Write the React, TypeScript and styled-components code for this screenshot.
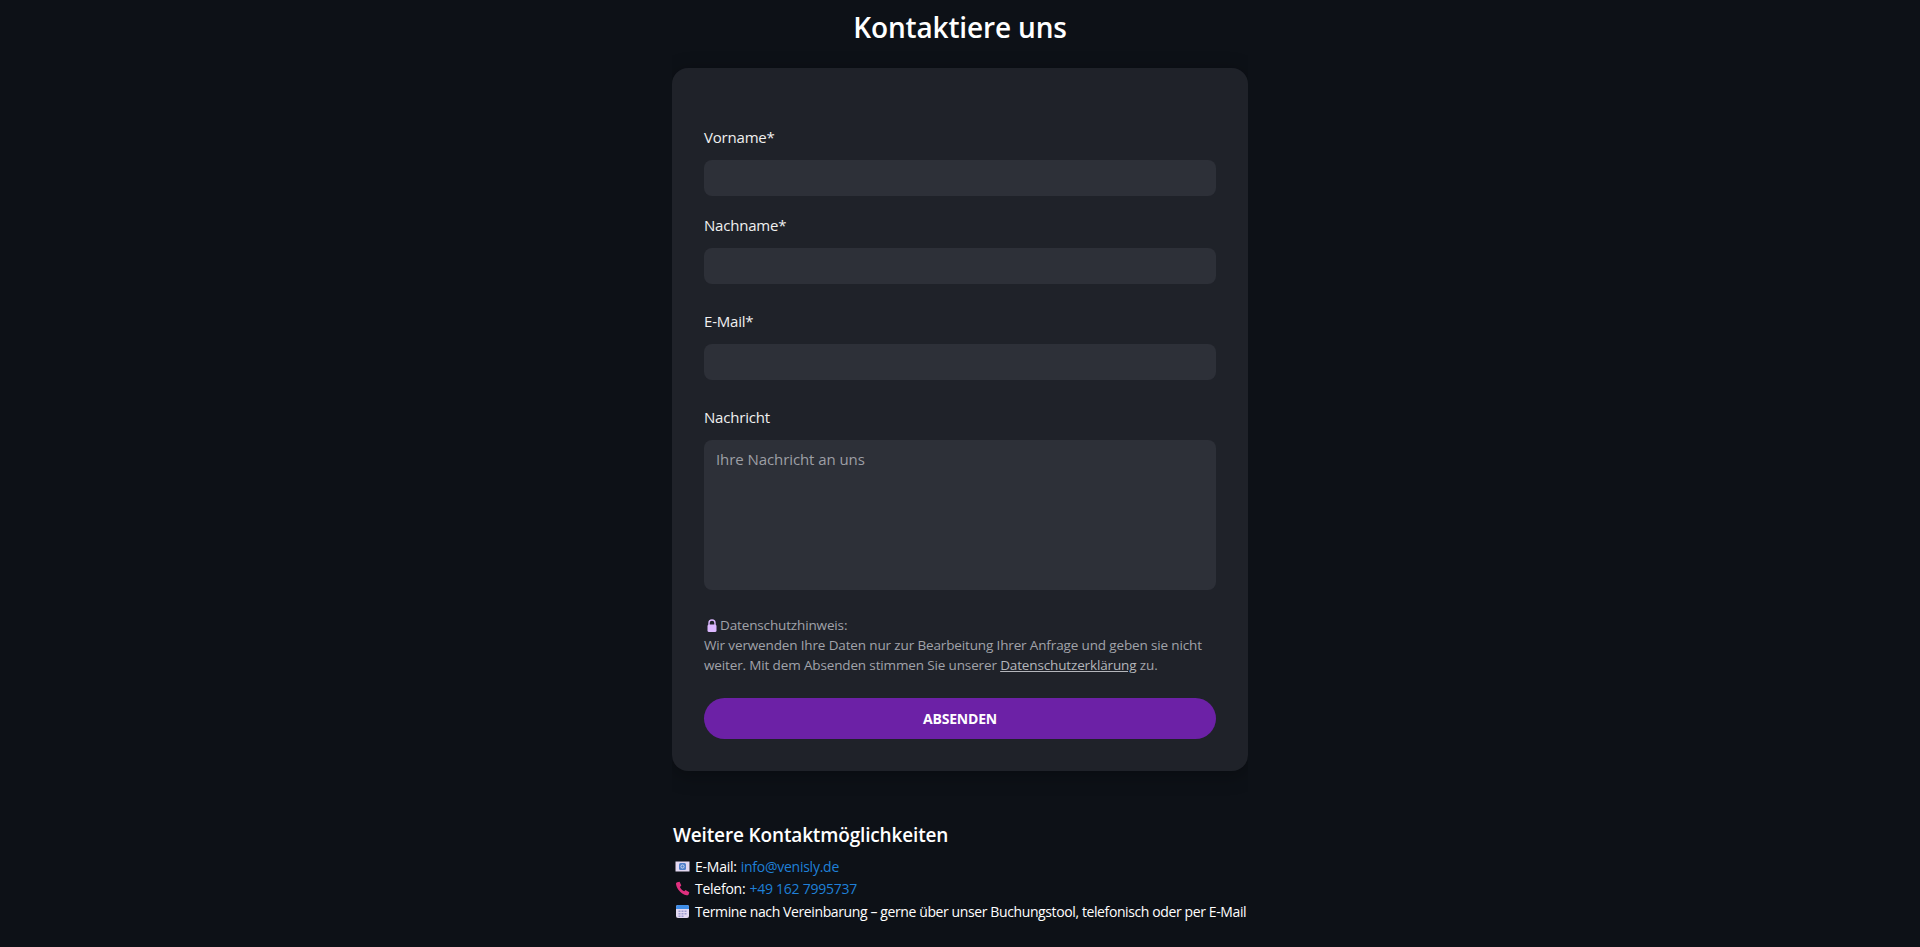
import styled, { createGlobalStyle } from 'styled-components';

const GlobalStyle = createGlobalStyle`
  html, body {
    margin: 0;
    padding: 0;
    background: #0d1117;
    color: #ffffff;
    font-family: 'Open Sans', 'Noto Sans', sans-serif;
  }
  * {
    box-sizing: border-box;
  }
`;

const Page = styled.main`
  width: 576px;
  margin: 0 auto;
  padding-top: 7px;
  height: 947px;
  overflow: hidden;
`;

const Title = styled.h1`
  margin: 0 0 21px;
  height: 40px;
  line-height: 40px;
  font-size: 28px;
  font-weight: 600;
  text-align: center;
  letter-spacing: -0.15px;
`;

const Card = styled.form`
  height: 703px;
  padding: 56px 32px 32px;
  background: #1f2229;
  border-radius: 16px;
  box-shadow: 0 4px 20px rgba(0, 0, 0, 0.3);
`;

const Field = styled.div<{ $gap: number }>`
  display: flex;
  flex-direction: column;
  margin-bottom: ${({ $gap }) => $gap}px;
`;

const Label = styled.label`
  height: 26px;
  line-height: 26px;
  margin-bottom: 10px;
  font-size: 15px;
  color: #f0f0f0;
  letter-spacing: -0.2px;
`;

const Input = styled.input`
  height: 36px;
  border: 0;
  border-radius: 8px;
  background: #2d3038;
`;

const TextArea = styled.textarea`
  height: 150px;
  padding: 9px 12px;
  border: 0;
  border-radius: 8px;
  background: #2d3038;
  resize: none;
  font: inherit;
  font-size: 15px;
  letter-spacing: -0.08px;
  color: #ffffff;

  &::placeholder {
    color: #9d9fa5;
    opacity: 1;
  }
`;

const Notice = styled.p`
  margin: 0 0 22.5px;
  font-size: 13.5px;
  line-height: 20px;
  color: #a1a3a9;
  letter-spacing: -0.14px;

  a {
    color: #b4b6bb;
    text-decoration: underline;
  }
`;

const LockIcon = styled.svg`
  width: 12px;
  height: 13px;
  margin: 0 2px;
  vertical-align: -2px;
`;

const SubmitButton = styled.button`
  display: block;
  width: 100%;
  height: 41px;
  border: 0;
  border-radius: 21px;
  background: #6c21a6;
  color: #ffffff;
  font: inherit;
  font-size: 14px;
  font-weight: 700;
  letter-spacing: -0.2px;
`;

const Contact = styled.section`
  margin-top: 50px;
`;

const ContactTitle = styled.h2`
  margin: 0 0 6px;
  padding-left: 1px;
  height: 28px;
  line-height: 28px;
  font-size: 19px;
  font-weight: 600;
  letter-spacing: -0.15px;
`;

const ContactRow = styled.div`
  display: flex;
  align-items: center;
  height: 22.5px;
  padding-left: 3px;
  font-size: 14px;
  letter-spacing: -0.25px;
  white-space: nowrap;
  gap: 4px;
`;

const RowIcon = styled.svg`
  width: 15px;
  height: 15px;
  margin-right: 1px;
  flex: none;
`;

const RowText = styled.span<{ $narrow?: boolean }>`
  color: #ffffff;
  letter-spacing: ${({ $narrow }) => ($narrow ? '-0.39px' : 'inherit')};
`;

const ContactLink = styled.a`
  color: #1f80d8;
  text-decoration: none;
`;

export default function App() {
  return (
    <>
      <GlobalStyle />
      <Page>
        <Title>Kontaktiere uns</Title>
        <Card>
          <Field $gap={16}>
            <Label>Vorname*</Label>
            <Input />
          </Field>
          <Field $gap={24}>
            <Label>Nachname*</Label>
            <Input />
          </Field>
          <Field $gap={24}>
            <Label>E-Mail*</Label>
            <Input />
          </Field>
          <Field $gap={25}>
            <Label>Nachricht</Label>
            <TextArea placeholder="Ihre Nachricht an uns" />
          </Field>
          <Notice>
            <LockIcon viewBox="0 0 12 13">
              <path d="M3 6V4a3 3 0 0 1 6 0v2" fill="none" stroke="#dcb8ff" strokeWidth="1.4" />
              <rect x="1.5" y="5.5" width="9" height="7.5" rx="1.5" fill="#dcb8ff" />
            </LockIcon>
            Datenschutzhinweis:
            <br />
            Wir verwenden Ihre Daten nur zur Bearbeitung Ihrer Anfrage und geben sie nicht
            <br />
            weiter. Mit dem Absenden stimmen Sie unserer <a href="#">Datenschutzerklärung</a> zu.
          </Notice>
          <SubmitButton type="button">ABSENDEN</SubmitButton>
        </Card>
        <Contact>
          <ContactTitle>Weitere Kontaktmöglichkeiten</ContactTitle>
          <ContactRow>
            <RowIcon viewBox="0 0 15 15">
              <rect x="0.5" y="2.5" width="14" height="10" fill="#e3d9f2" />
              <rect x="4" y="4" width="7" height="7" rx="1.5" fill="#4f7fc9" />
              <circle cx="7.5" cy="7.5" r="1.6" fill="none" stroke="#dfe7f7" strokeWidth="0.8" />
            </RowIcon>
            <RowText>E-Mail:</RowText>
            <ContactLink href="#">info@venisly.de</ContactLink>
          </ContactRow>
          <ContactRow>
            <RowIcon viewBox="0 0 15 15">
              <path
                d="M2.2 1.2 4.6.7l1.7 3.8-1.4 1.4c.7 1.8 2.4 3.5 4.3 4.4l1.3-1.2 3.8 2.2-.7 2.1c-.4.9-1.2 1.1-2.1.9C6 13 1.7 8.2 1 3c-.1-.8.4-1.600 1.200-1.800Z"
                fill="#e0307f"
              />
            </RowIcon>
            <RowText>Telefon:</RowText>
            <ContactLink href="#">+49 162 7995737</ContactLink>
          </ContactRow>
          <ContactRow>
            <RowIcon viewBox="0 0 15 15">
              <rect x="1" y="1" width="13" height="13" rx="2" fill="#e3d9f2" />
              <path d="M1 5V3a2 2 0 0 1 2-2h9a2 2 0 0 1 2 2v2Z" fill="#3f8ee8" />
              <path
                d="M3.5 6.500h2V8h-2zM6.500 6.500h2V8h-2zM9.500 6.500h2V8h-2zM3.500 9h2v1.500h-2zM6.500 9h2v1.500h-2zM9.500 9h2v1.500h-2zM3.500 11.500h2V13h-2zM6.500 11.500h2V13h-2z"
                fill="#9c9ccf"
              />
            </RowIcon>
            <RowText $narrow>Termine nach Vereinbarung – gerne über unser Buchungstool, telefonisch oder per E-Mail</RowText>
          </ContactRow>
        </Contact>
      </Page>
    </>
  );
}
